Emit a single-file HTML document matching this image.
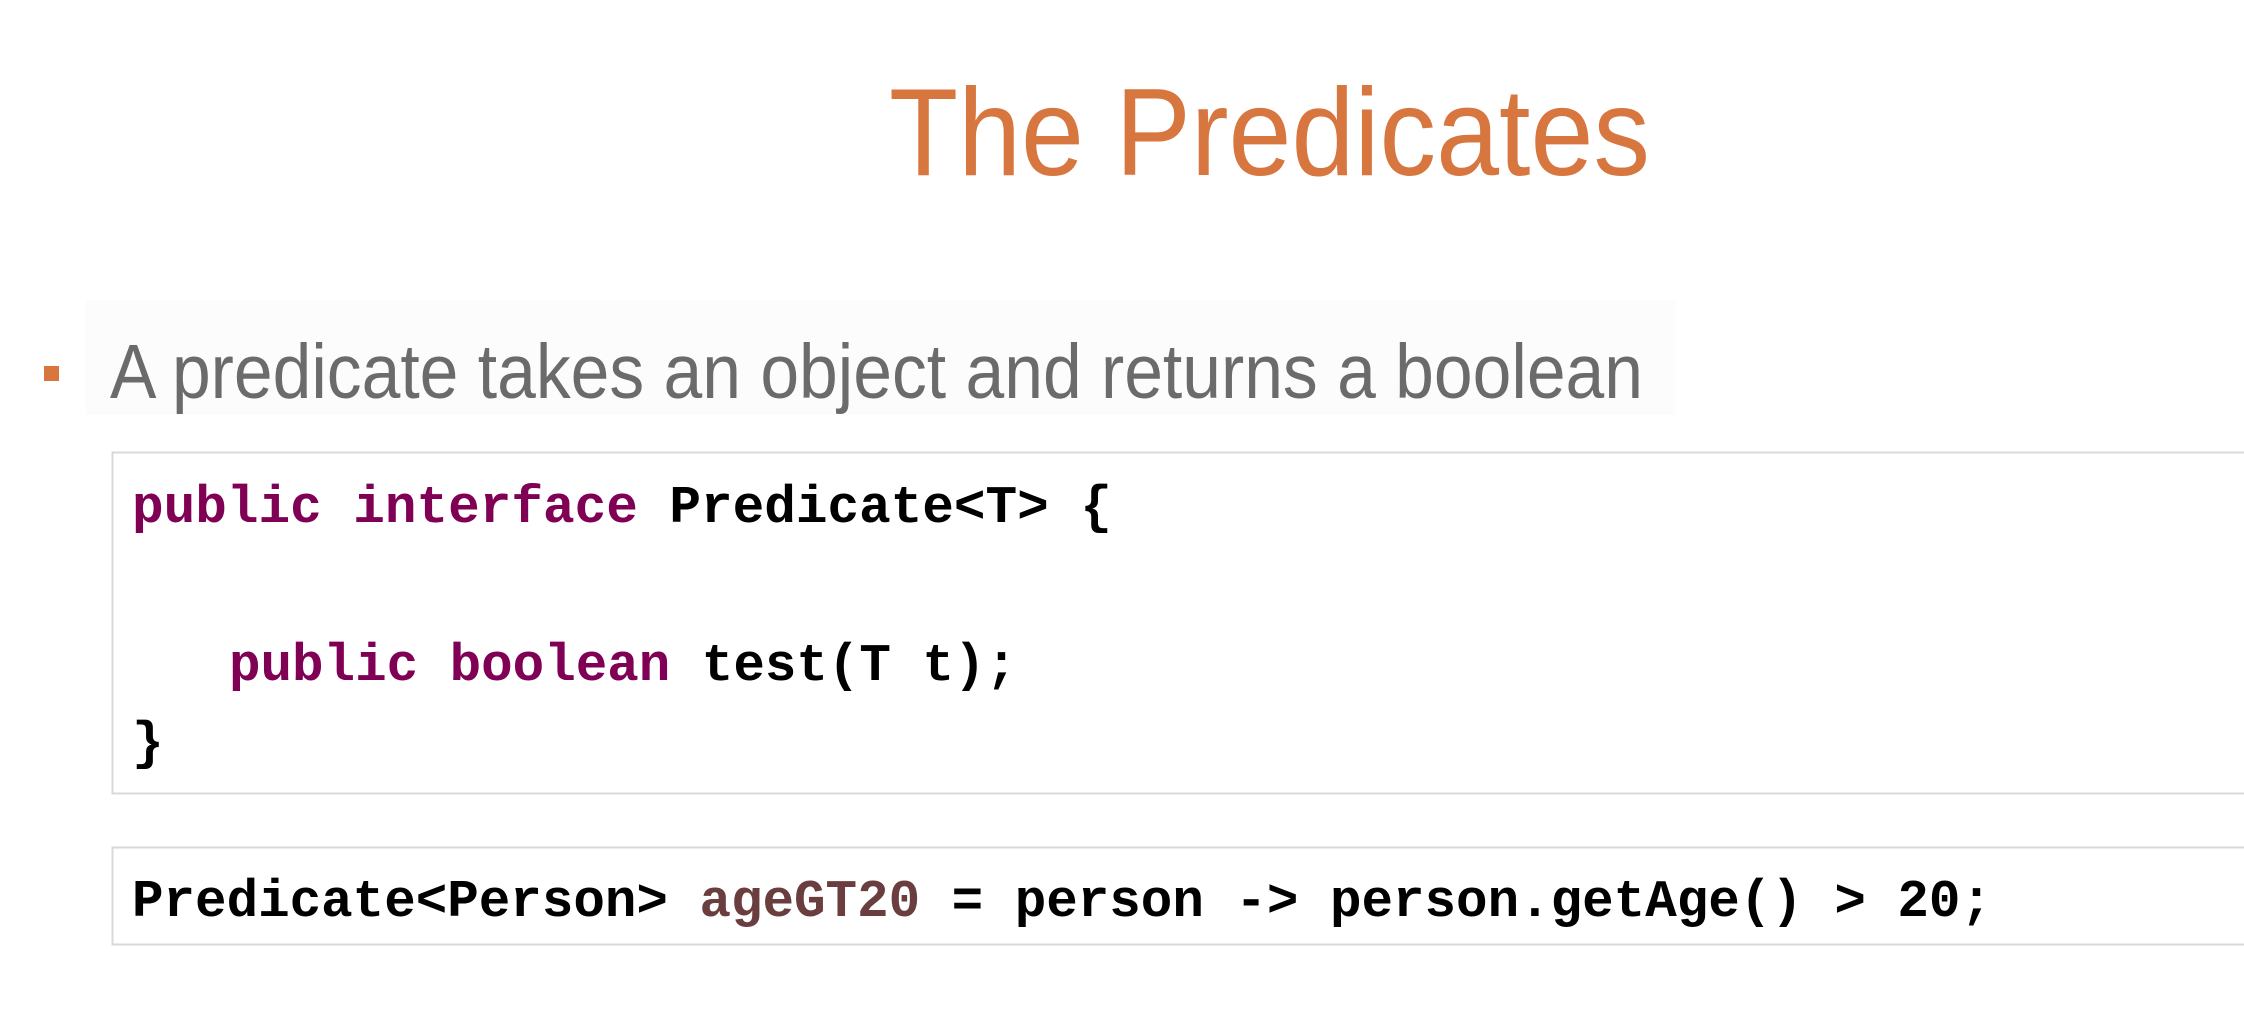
<!DOCTYPE html>
<html><head><meta charset="utf-8"><style>
html,body{margin:0;padding:0;background:#fff;width:2244px;height:1034px;overflow:hidden}
svg{display:block}
</style></head><body>
<svg width="2244" height="1034" viewBox="0 0 2244 1034" xmlns="http://www.w3.org/2000/svg">
<rect width="2244" height="1034" fill="#fff"/>
<rect x="86" y="300" width="1590" height="115" fill="#fcfcfc"/>
<text x="889" y="175" font-family="Liberation Sans, sans-serif" font-size="124" fill="#D7763F" textLength="761" lengthAdjust="spacingAndGlyphs">The Predicates</text>
<rect x="44" y="366" width="15" height="15" fill="#D7763F"/>
<text x="110" y="398" font-family="Liberation Sans, sans-serif" font-size="77" fill="#6b6b6b" textLength="1533" lengthAdjust="spacingAndGlyphs">A predicate takes an object and returns a boolean</text>
<rect x="112.5" y="452.5" width="2140" height="341" fill="#fff" stroke="#d9d9d9" stroke-width="2"/>
<rect x="112.5" y="847.5" width="2140" height="97" fill="#fff" stroke="#d9d9d9" stroke-width="2"/>
<g font-family="Liberation Mono, monospace" font-weight="bold" font-size="53">
<text x="132" y="522" textLength="980" lengthAdjust="spacingAndGlyphs"><tspan fill="#7F0055">public interface</tspan><tspan fill="#000"> Predicate&lt;T&gt; {</tspan></text>
<text x="229" y="680" textLength="788" lengthAdjust="spacingAndGlyphs"><tspan fill="#7F0055">public boolean</tspan><tspan fill="#000"> test(T t);</tspan></text>
<text x="132" y="758" fill="#000">}</text>
<text x="132" y="916" textLength="1860" lengthAdjust="spacingAndGlyphs"><tspan fill="#000">Predicate&lt;Person&gt; </tspan><tspan fill="#6A3E3E">ageGT20</tspan><tspan fill="#000"> = person -&gt; person.getAge() &gt; 20;</tspan></text>
</g>
</svg>
</body></html>
